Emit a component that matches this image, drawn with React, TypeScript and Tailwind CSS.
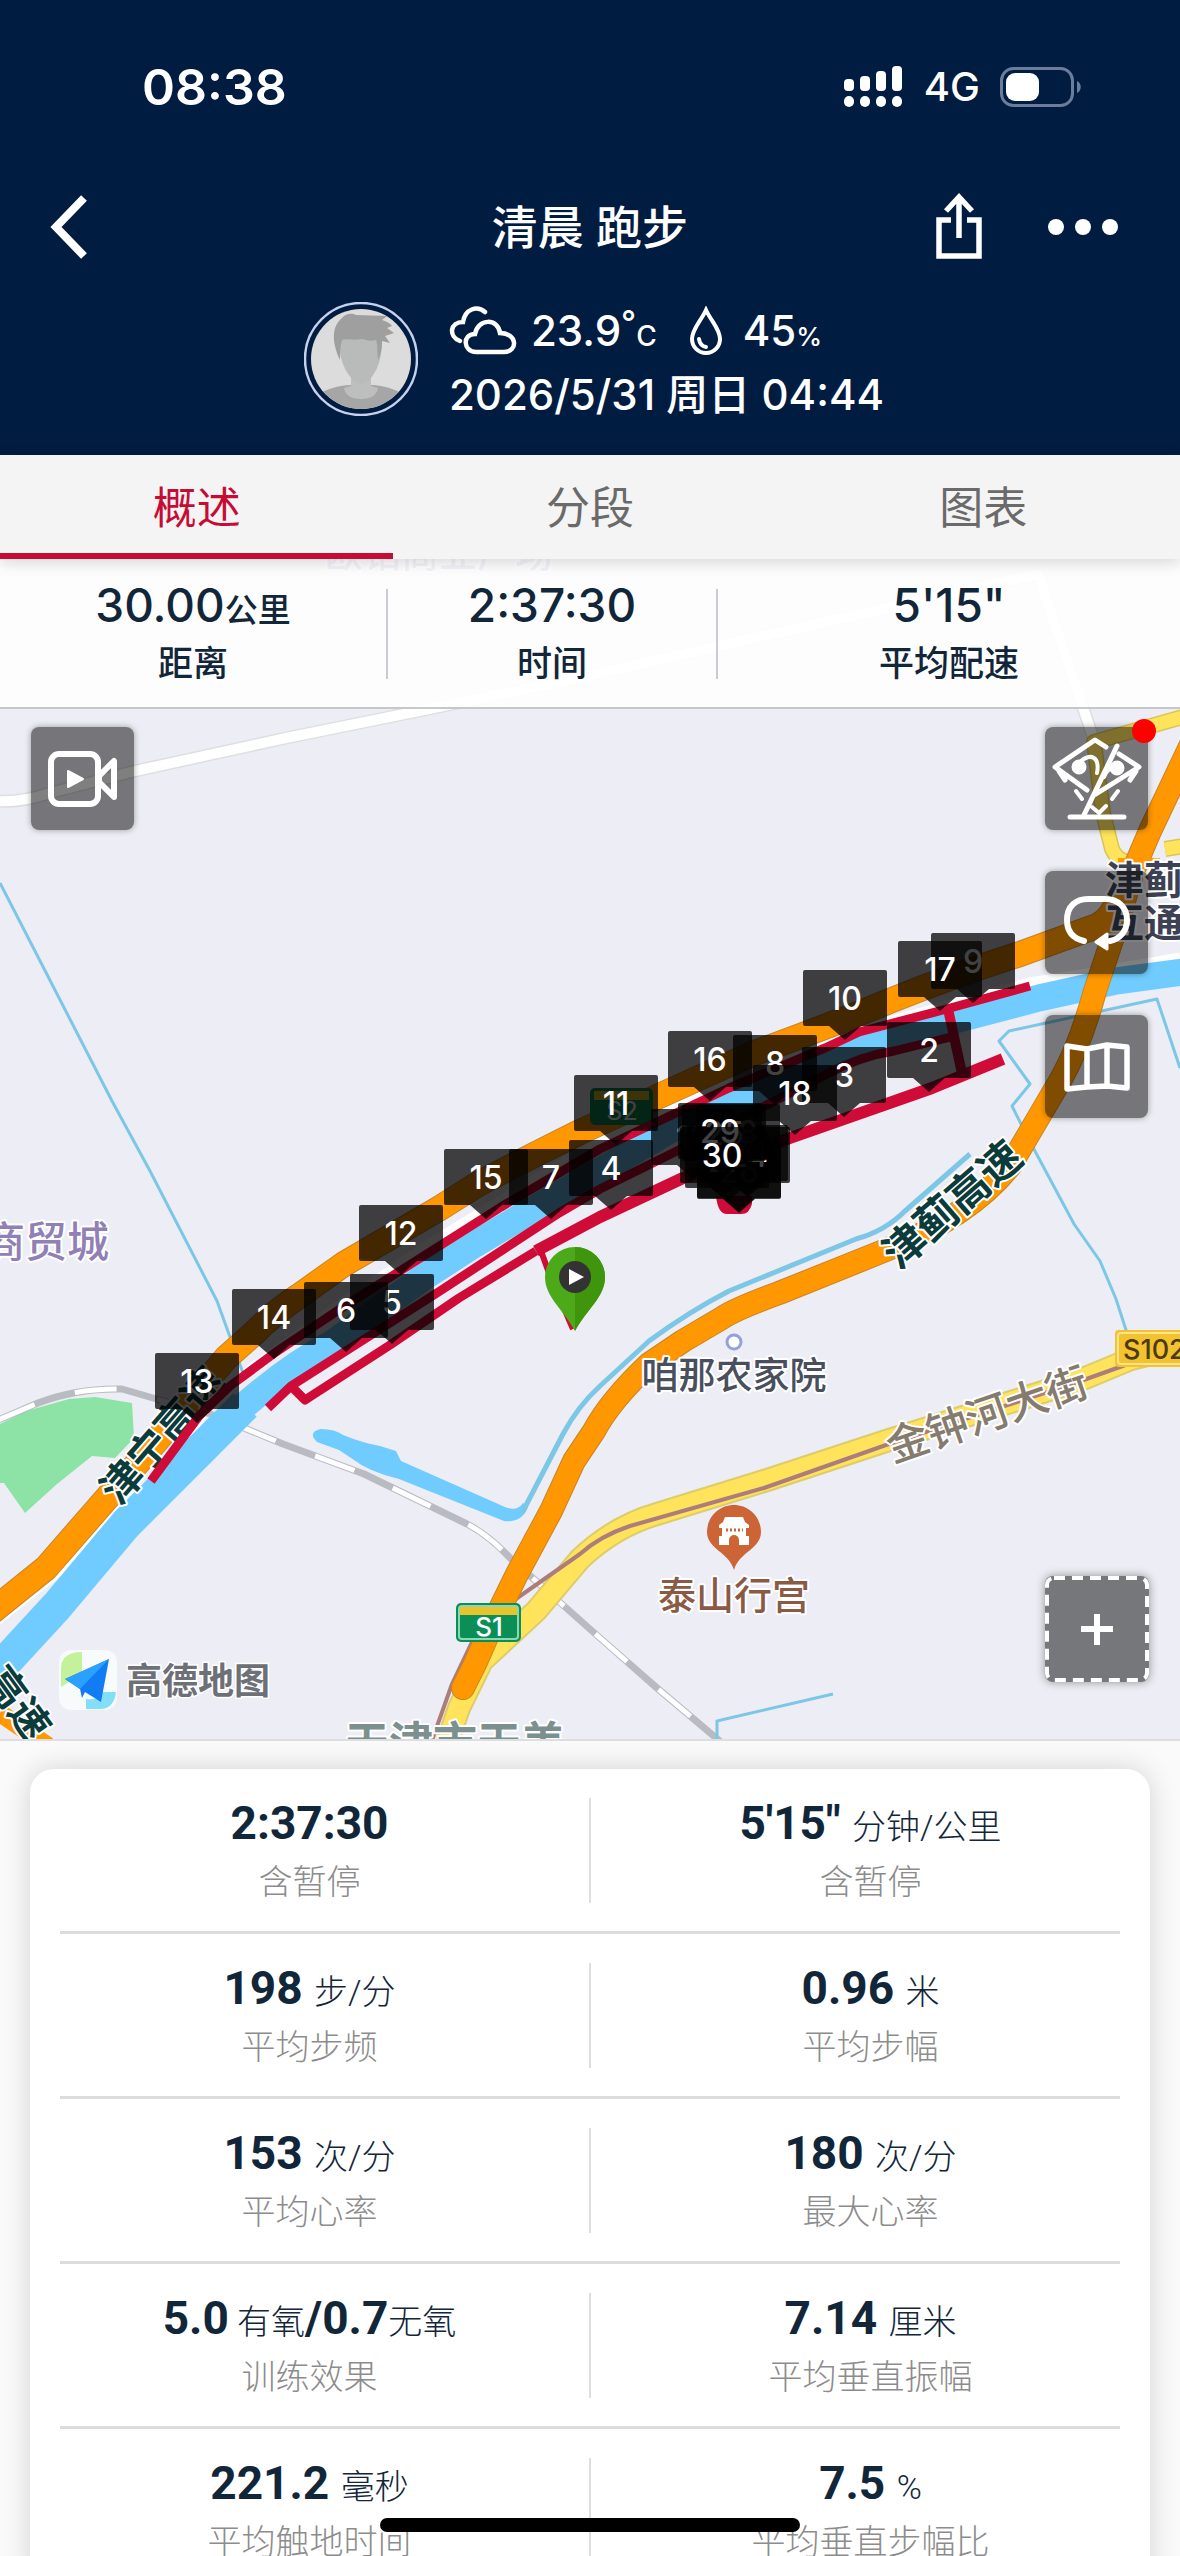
import React, { useState } from 'react';

type Marker = { n: string; x: number; y: number };

// x is the centre of the flag, y its top edge; later ones lie over earlier ones
const markers: Marker[] = [
  { n: '9', x: 973, y: 932 },
  { n: '2', x: 929, y: 1021 },
  { n: '3', x: 844, y: 1046 },
  { n: '4', x: 611, y: 1139 },
  { n: '5', x: 392, y: 1273 },
  { n: '6', x: 346, y: 1281 },
  { n: '7', x: 551, y: 1148 },
  { n: '8', x: 775, y: 1034 },
  { n: '10', x: 845, y: 969 },
  { n: '11', x: 616, y: 1074 },
  { n: '12', x: 401, y: 1204 },
  { n: '13', x: 197, y: 1352 },
  { n: '14', x: 274, y: 1288 },
  { n: '15', x: 486, y: 1148 },
  { n: '16', x: 710, y: 1030 },
  { n: '17', x: 940, y: 940 },
  { n: '18', x: 795, y: 1064 },
  { n: '19', x: 693, y: 1108 },
  { n: '21', x: 739, y: 1141 },
  { n: '22', x: 746, y: 1124 },
  { n: '26', x: 739, y: 1142 },
  { n: '27', x: 727, y: 1131 },
  { n: '24', x: 748, y: 1126 },
  { n: '28', x: 738, y: 1103 },
  { n: '25', x: 724, y: 1104 },
  { n: '29', x: 720, y: 1102 },
  { n: '30', x: 722, y: 1126 },
];

const summary = [
  { value: '30.00', unit: '公里', label: '距离' },
  { value: '2:37:30', unit: '', label: '时间' },
  { value: '5\'15"', unit: '', label: '平均配速' },
];

type Part = { text: string; unit?: boolean };
type Stat = { parts: Part[]; label: string };

const stat = (value: string, unit: string, label: string): Stat => ({
  parts: unit ? [{ text: value + ' ' }, { text: unit, unit: true }] : [{ text: value }],
  label,
});

const rows: Stat[][] = [
  [stat('2:37:30', '', '含暂停'), stat('5\'15"', '分钟/公里', '含暂停')],
  [stat('198', '步/分', '平均步频'), stat('0.96', '米', '平均步幅')],
  [stat('153', '次/分', '平均心率'), stat('180', '次/分', '最大心率')],
  [
    {
      parts: [
        { text: '5.0' },
        { text: ' 有氧', unit: true },
        { text: '/0.7' },
        { text: '无氧', unit: true },
      ],
      label: '训练效果',
    },
    stat('7.14', '厘米', '平均垂直振幅'),
  ],
  [stat('221.2', '毫秒', '平均触地时间'), stat('7.5', '%', '平均垂直步幅比')],
];

const StatusBar: React.FC = () => (
  <div className="flex h-[62px] items-center justify-between pl-[142px] pr-[98px]">
    <span className="text-[50px] leading-[62px] font-semibold">08:38</span>
    <div className="flex items-center gap-5">
      <svg width="60" height="42" viewBox="0 0 60 42" fill="#fff" aria-hidden="true">
        <rect x="0" y="13" width="10" height="12" rx="4" />
        <rect x="16" y="10" width="10" height="15" rx="4" />
        <rect x="32" y="5" width="10" height="20" rx="4" />
        <rect x="48" y="0" width="10" height="25" rx="4" />
        <rect x="0" y="30" width="10" height="11" rx="5" />
        <rect x="16" y="30" width="10" height="11" rx="5" />
        <rect x="32" y="30" width="10" height="11" rx="5" />
        <rect x="48" y="30" width="10" height="11" rx="5" />
      </svg>
      <span className="text-[40px] leading-[62px] font-medium">4G</span>
      <svg width="82" height="40" viewBox="0 0 82 40" aria-hidden="true">
        <rect x="1.5" y="1.5" width="71" height="37" rx="12" fill="none" stroke="#6b7c9c" strokeWidth="3" />
        <rect x="6" y="6" width="33" height="28" rx="9" fill="#fff" />
        <path d="M77 14c5 2 5 10 0 12z" fill="#6b7c9c" />
      </svg>
    </div>
  </div>
);

const Header: React.FC = () => (
  <header className="bg-[#001c40] pt-[56px] pb-[31px] text-white">
    <StatusBar />
    <div className="mt-[64px] grid h-[90px] grid-cols-[1fr_auto_1fr] items-center px-[46px]">
      <button aria-label="返回" className="justify-self-start">
        <svg width="44" height="66" viewBox="0 0 44 66" fill="none" stroke="#fff" strokeWidth="8">
          <path d="M38 4 10 33l28 29" />
        </svg>
      </button>
      <h1 className="text-[46px] leading-[60px] font-medium">清晨 跑步</h1>
      <div className="flex items-center justify-end gap-[62px] pr-[14px]">
        <button aria-label="分享">
          <svg width="50" height="70" viewBox="0 0 50 70" fill="none" stroke="#fff" strokeWidth="5.5">
            <path d="M17 28H5v36h40V28H33M25 46V7M12 19 25 5l13 14" />
          </svg>
        </button>
        <button aria-label="更多">
          <svg width="74" height="20" viewBox="0 0 74 20" fill="#fff">
            <circle cx="10" cy="10" r="8" />
            <circle cx="37" cy="10" r="8" />
            <circle cx="64" cy="10" r="8" />
          </svg>
        </button>
      </div>
    </div>
    <div className="mt-[30px] flex items-start justify-center gap-[31px] pl-2">
      <svg width="114" height="114" viewBox="0 0 114 114" role="img" aria-label="头像">
        <clipPath id="face">
          <circle cx="57" cy="57" r="50" />
        </clipPath>
        <circle cx="57" cy="57" r="56" fill="none" stroke="#c5d0ee" strokeWidth="2.5" />
        <g clipPath="url(#face)">
          <rect width="114" height="114" fill="#dcdcdc" />
          <path d="M18 90q16-7 28-7h24q14 1 30 9v22H18z" fill="#a6a6a6" />
          <path d="M47 76h20v8l7 2q-2 11-17 11T40 86l7-2z" fill="#bdbebe" />
          <path d="M35 34h43c1 24-6 36-12 43q-9 9-17 1C41 70 34 56 35 34z" fill="#b9bbbb" />
          <path d="M36 58c-8-17-9-33 2-42 4-5 10-5 14-3 12 0 22 1 31 1l-5 4c6 2 9 4 10 6l-5 2 7 5-9 3 5 7-8-2c0 7-1 13-4 19-1-8 0-14-2-20-8 2-12-1-15-1-8 2-14-1-19 1-2 7-2 13-2 20z" fill="#9f9f9f" />
        </g>
      </svg>
      <div className="flex flex-col gap-[6px] text-[42px] leading-[58px] font-medium">
        <div className="flex h-[58px] items-center">
          <svg width="70" height="50" viewBox="0 0 70 50" fill="none" stroke="#fff" strokeWidth="4.5" strokeLinecap="round" aria-hidden="true">
            <path d="M11 35C-1 30 1 16 14 16 16 3 28-1 36 6" />
            <path d="M27 46c-13 0-14-18-1-18C29 12 49 12 51 27c18 0 18 19 4 19z" />
          </svg>
          <p className="ml-3 h-[58px]">
            23.9
            <span className="text-[28px] leading-none">
              <span className="align-[12px] text-[33px] leading-none">°</span>C
            </span>
          </p>
          <svg className="ml-8 mr-5" width="34" height="50" viewBox="0 0 34 50" fill="none" stroke="#fff" strokeWidth="4" strokeLinecap="round" aria-hidden="true">
            <path d="M17 4C12 15 3 23 3 33a14 14 0 0 0 28 0C31 23 22 15 17 4z" />
            <path d="M10 33q1 7 7 8" />
          </svg>
          <p className="h-[58px]">
            45<span className="text-[26px] leading-none">%</span>
          </p>
        </div>
        <p className="h-[58px]">2026/5/31 周日 04:44</p>
      </div>
    </div>
  </header>
);

type LabelProps = { x: number; y: number; size: number; fill: string; rotate?: number; bold?: boolean; children: string };

const MapLabel: React.FC<LabelProps> = ({ x, y, size, fill, rotate = 0, bold, children }) => (
  <text
    transform={`translate(${x} ${y}) rotate(${rotate})`}
    textAnchor="middle"
    dominantBaseline="central"
    fontSize={size}
    fontWeight={bold ? 700 : 500}
    fill={fill}
    stroke="#fff"
    strokeWidth="4"
    strokeLinejoin="round"
    paintOrder="stroke"
  >
    {children}
  </text>
);

const orangeMain = 'M-10 1612 46 1567 107 1497 142 1457 226 1357 253 1333Q276 1310 299 1295L344 1263 440 1207 478 1183 536 1153 580 1131 668 1091 752 1053 798 1036 848 1017 892 999Q960 972 1020 953L1097 925Q1112 918 1118 898';
const orangeSide = 'M1195 735 1150 830 1133 870 1115 930 1095 990Q1080 1045 1060 1080L1010 1165Q970 1215 886 1249L779 1292Q735 1308 722 1317L683 1340 649 1363Q610 1400 594 1430L574 1460 551 1510 517 1573 494 1620 475 1663 463 1687';
const yellowRoad = 'M1180 1346 1131 1358 1078 1380 886 1440 764 1480 657 1513Q615 1525 580 1558L536 1610 482 1660 459 1707 446 1745';
const rail = 'M-4 1420 38 1402Q77 1387 122 1388L153 1397 210 1413 283 1443 364 1473 467 1523Q490 1535 513 1560L536 1580 555 1597 600 1637 657 1687 722 1742';
const river = 'M-14 1682 57 1605 126 1523 199 1450 245 1404Q290 1365 333 1342L421 1278 475 1243 536 1207 600 1170 668 1130 745 1095 886 1037 963 1017 1039 997 1116 980 1190 970';

const MapDrawing: React.FC = () => (
  <svg
    className="col-start-1 row-start-1 h-auto w-full bg-[#ededf5] font-['Inter','Noto_Sans_CJK_SC',sans-serif]"
    viewBox="0 558 1180 1180"
    role="img"
    aria-label="跑步路线地图"
  >
    <g fill="none" strokeLinejoin="round">
      <path d="M0 1423 23 1411 69 1398 95 1396 132 1402 134 1437 115 1457 92 1455 57 1483 25 1512 4 1482H0z" fill="#8ce3a5" />

      {/* small roads */}
      <path d="M-5 800Q20 802 50 792L135 770 286 737 429 708 564 680 1038 573 1095 742" stroke="#dcdfe0" strokeWidth="13" />
      <path d="M-5 800Q20 802 50 792L135 770 286 737 429 708 564 680 1038 573 1095 742" stroke="#fff" strokeWidth="10" />
      <path d="M-5 1622 60 1570 118 1500 160 1478 205 1410 250 1368 330 1310 430 1242 600 1138 760 1068 860 1028 1030 981 1100 970 1180 956" stroke="#fff" strokeWidth="9" />

      {/* railway */}
      <path d={rail} stroke="#b9bbc3" strokeWidth="7" />
      <path d={rail} stroke="#fff" strokeWidth="5" strokeDasharray="42 42" />

      {/* water */}
      <path d={river} stroke="#70ccff" strokeWidth="27" />
      <path d="M-14 1682 57 1605 126 1523 199 1450 245 1404" stroke="#70ccff" strokeWidth="33" />
      <path d="M321 1428q14 0 22 6 20 8 37 11l16 5 5 10 104 46q12 5 18-4l5 4q-6 16-24 14l-105-42q-30-7-48-21l-12-8-22-8q-10-10 4-13z" fill="#70ccff" />
      <g stroke="#7cc6e6" strokeWidth="3">
        <path d="M0 882 112 1100 150 1170 217 1300 243 1372" />
        <path d="M522 1512 563 1433Q578 1405 600 1385L649 1340Q690 1310 729 1290L856 1238Q885 1230 905 1210L970 1153" strokeWidth="5" />
        <path d="M1180 1067 1157 998 1009 1030 999 1040 1030 1083 1012 1105 1028 1137 1074 1223 1100 1260 1116 1298 1127 1332" />
        <path d="M717 1740V1720L833 1693" />
      </g>

      {/* main roads */}
      <path d="M1190 714 1094 741 1103 812 1112 848Q1120 866 1140 858M1165 848l25-4" stroke="#d9c553" strokeWidth="16" />
      <path d="M1190 714 1094 741 1103 812 1112 848Q1120 866 1140 858M1165 848l25-4" stroke="#ffe35a" strokeWidth="13" />
      <path d={yellowRoad} stroke="#dccd6a" strokeWidth="24" />
      <path d={yellowRoad} stroke="#ffe35a" strokeWidth="20" />
      <path d="M1131 1362 1078 1381 886 1444 764 1487 630 1525Q600 1535 580 1553L513 1600Q480 1630 471 1643L452 1683 430 1745" stroke="#ad7c7c" strokeWidth="4" />
      <path d={orangeMain} stroke="#c98324" strokeWidth="26" />
      <path d={orangeSide} stroke="#c98324" strokeWidth="24" strokeLinecap="round" />
      <path d={orangeMain} stroke="#ff9800" strokeWidth="24" />
      <path d={orangeSide} stroke="#ff9800" strokeWidth="22" strokeLinecap="round" />
      <path d="M0 1712 48 1745" stroke="#ff9800" strokeWidth="18" />
      <path d="M1118 862 1160 862" stroke="#ff9800" strokeWidth="10" />
    </g>

    {/* road shields */}
    <rect x="590" y="1087" width="63" height="37" rx="5" fill="#0a8f57" />
    <rect x="594" y="1090" width="55" height="9" fill="#e8c42c" />
    <text x="622" y="1119" textAnchor="middle" fontSize="25" fill="#fff">S2</text>
    <rect x="456" y="1602" width="65" height="39" rx="5" fill="#0a8f57" />
    <rect x="459" y="1605" width="59" height="33" rx="3" fill="none" stroke="#8fd6b4" strokeWidth="2" />
    <rect x="460" y="1606" width="57" height="8" fill="#e8c42c" />
    <text x="489" y="1635" textAnchor="middle" fontSize="26" fontWeight="500" fill="#fff">S1</text>
    <rect x="1115" y="1329" width="90" height="37" rx="4" fill="#f2c230" />
    <rect x="1118" y="1332" width="90" height="31" rx="3" fill="none" stroke="#ffe489" strokeWidth="2" />
    <text x="1123" y="1358" fontSize="27" fontWeight="500" fill="#4c3b12">S102</text>

    {/* place names */}
    <MapLabel x={439} y={552} size={38} fill="#8f86c4">欧铂商业广场</MapLabel>
    <MapLabel x={46} y={1240} size={42} fill="#9180b5">商贸城</MapLabel>
    <MapLabel x={1144} y={878} size={39} fill="#3c4154" bold>津蓟</MapLabel>
    <MapLabel x={1144} y={921} size={39} fill="#3c4154" bold>互通</MapLabel>
    <MapLabel x={952} y={1203} size={42} fill="#0b3b3b" rotate={-41} bold>津蓟高速</MapLabel>
    <MapLabel x={162} y={1434} size={41} fill="#0b3b3b" rotate={-49} bold>津宁高速</MapLabel>
    <MapLabel x={18} y={1702} size={40} fill="#0b3b3b" rotate={54} bold>高速</MapLabel>
    <MapLabel x={734} y={1374} size={37} fill="#4a4f5e">咱那农家院</MapLabel>
    <MapLabel x={987} y={1413} size={42} fill="#857b6f" rotate={-19}>金钟河大街</MapLabel>
    <MapLabel x={734} y={1594} size={38} fill="#8a5a45">泰山行宫</MapLabel>
    <MapLabel x={455} y={1742} size={44} fill="#7c9090" bold>天津市天美</MapLabel>
    <circle cx="734" cy="1341" r="7" fill="#fff" stroke="#93a0da" strokeWidth="3" />
    <path d="M734 1504c15 0 27 12 27 27 0 17-22 20-27 38-5-18-27-21-27-38 0-15 12-27 27-27z" fill="#cd6436" />
    <path d="M725 1516h18l2 5 4 3v3h-3v8h3v9h-10v-5a5 5 0 0 0-10 0v5h-10v-9h3v-8h-3v-3l4-3z" fill="#fff" />
    <path d="M726 1529h17" stroke="#cd6436" strokeWidth="3" strokeDasharray="2 2" />

    {/* recorded track */}
    <g fill="none" stroke="#cf0b37" strokeWidth="9" strokeLinejoin="round">
      <path d="M151 1480 199 1415 230 1385 276 1351 340 1308 411 1263 501 1206 600 1148 729 1087 825 1047 859 1031 943 1009 1030 985" />
      <path d="M268 1407 291 1385 360 1341 440 1290 559 1212 600 1188 683 1147 825 1074Q860 1055 894 1050L951 1036" />
      <path d="M291 1385 305 1399 390 1344 459 1297 536 1250" />
      <path d="M536 1250 600 1216 683 1177 790 1137 932 1087 1003 1058" strokeWidth="12" />
      <path d="M948 1008 963 1077" strokeWidth="10" />
      <path d="M541 1250 549 1272 573 1328" strokeWidth="6" />
    </g>
    <path d="M716 1195h36v8q-3 11-12 10h-12q-10 1-12-18z" fill="#cf0b37" />

    {markers.map(({ n, x, y }) => (
      <g key={n} transform={`translate(${x} ${y})`}>
        <path d="M-40 0h80q2 0 2 2v52q0 2-2 2H16L0 70-16 56h-24q-2 0-2-2V2q0-2 2-2z" fill="#000" fillOpacity="0.74" />
        <text y="40" textAnchor="middle" fontSize="32" fontWeight="500" fill="#fff">
          {n}
        </text>
      </g>
    ))}

    {/* start pin */}
    <path d="M575 1246a30 30 0 0 1 30 30c0 20-18 32-30 54-12-22-30-34-30-54a30 30 0 0 1 30-30z" fill="#4caa18" />
    <path d="M575 1246a30 30 0 0 1 30 30c0 20-18 32-30 54z" fill="#3f950c" />
    <circle cx="575" cy="1276" r="16" fill="#333" />
    <path d="M569 1268v16l15-8z" fill="#fff" />

    {/* map vendor mark */}
    <rect x="59" y="1649" width="58" height="60" rx="12" fill="#f8fbfc" />
    <path d="M61 1670q-1-19 21-19v22l-21 13z" fill="#c3f29b" />
    <path d="M86 1698q12 2 15-7h15q-2 17-16 17H86z" fill="#83def8" />
    <path d="M65 1678 109 1658 101 1701 85 1691 82 1697 80 1688z" fill="#117cf4" />
    <path d="M109 1658 80 1688 65 1678z" fill="#2aa0ff" />
    <text x="198" y="1693" textAnchor="middle" fontSize="36" fontWeight="700" fill="#6d7076" stroke="#fff" strokeWidth="3" paintOrder="stroke">
      高德地图
    </text>
  </svg>
);

const MapButton: React.FC<{ label: string; dot?: boolean; children: React.ReactNode }> = ({ label, dot, children }) => (
  <button
    aria-label={label}
    className="relative flex h-[103px] w-[103px] items-center justify-center rounded-lg bg-black/50 shadow-[0_0_6px_rgba(0,0,0,0.35)]"
  >
    {children}
    {dot && <span className="absolute -top-2 -right-2 h-6 w-6 rounded-full bg-[#ff0000]" />}
  </button>
);

const MapSection: React.FC = () => (
  <section className="grid border-b-2 border-[#dddde2]">
    <MapDrawing />
    <div className="z-10 col-start-1 row-start-1 flex flex-col">
      <div className="grid h-[150px] grid-cols-[388fr_330fr_462fr] border-b-2 border-[#c6c7c9] bg-white/90 pt-[2px] text-[#12263a]">
        {summary.map((s, i) => (
          <div key={s.label} className="flex items-center">
            <div className="flex-1 text-center font-medium">
              <p className="h-[58px] text-[46px] leading-[58px]">
                {s.value}
                {s.unit && <span className="text-[33px] leading-none">{s.unit}</span>}
              </p>
              <p className="h-[58px] text-[35px] leading-[58px]">{s.label}</p>
            </div>
            {i < summary.length - 1 && <div className="h-[90px] w-[2px] bg-[#c9ccd1]" />}
          </div>
        ))}
      </div>
      <div className="flex flex-1 justify-between px-[31px] pt-[18px] pb-[57px]">
        <MapButton label="视频">
          <svg width="70" height="56" viewBox="0 0 70 56" fill="none" stroke="#fff" strokeWidth="6" strokeLinejoin="round">
            <rect x="3" y="3" width="47" height="50" rx="8" />
            <path d="M51 25 66 10v36L51 31z" />
            <path d="M20 20v16l15-8z" fill="#fff" strokeWidth="2" />
          </svg>
        </MapButton>
        <div className="flex flex-col">
          <div className="flex flex-col gap-[41px]">
            <MapButton label="街景" dot>
              <svg width="90" height="84" viewBox="0 0 90 84" fill="none" stroke="#fff" strokeWidth="5" strokeLinecap="round" strokeLinejoin="round">
                <path d="M54 10 43 3 3 30l32 23M7 34l6 9M67 17l20 13-43 27M84 34l-6 9M65 9 32 78M18 80h54" />
                <path d="M24 54l6 8M66 54l-6 8M40 70l7 6 7-7M29 24c10-8 19-4 16 12M52 40q3-9 12-10" strokeWidth="4" />
                <circle cx="27" cy="30" r="5" fill="#fff" />
                <circle cx="65" cy="31" r="5" fill="#fff" />
              </svg>
            </MapButton>
            <MapButton label="回放">
              <svg width="68" height="60" viewBox="0 0 68 60" fill="none" stroke="#fff" strokeWidth="6" strokeLinecap="round">
                <path d="M21 48C8 45 4 36 4 27 4 13 13 6 25 6h17c13 0 22 8 22 21 0 11-7 19-17 21" />
                <path d="M33 49 44 41v15z" fill="#fff" strokeWidth="3" strokeLinejoin="round" />
              </svg>
            </MapButton>
            <MapButton label="地图类型">
              <svg width="66" height="50" viewBox="0 0 66 50" fill="none" stroke="#fff" strokeWidth="5.5" strokeLinejoin="round">
                <path d="M3 4 23 7 43 3l20 2v41l-20-2-20 1L3 47zM23 7v38M43 3v41" />
              </svg>
            </MapButton>
          </div>
          <button
            aria-label="添加"
            className="mt-auto flex h-[106px] w-[104px] items-center justify-center rounded-lg bg-[#76777b] shadow-[0_0_10px_rgba(0,0,0,0.4)]"
          >
            <svg width="104" height="106" viewBox="0 0 104 106" fill="none" stroke="#fff">
              <rect x="2" y="2" width="100" height="102" rx="7" strokeWidth="4" strokeDasharray="11 7" />
              <path d="M52 38v31M36 53h32" strokeWidth="6" />
            </svg>
          </button>
        </div>
      </div>
    </div>
  </section>
);

const StatCell: React.FC<{ item: Stat }> = ({ item }) => (
  <div className="flex-1 pt-1 text-center">
    <p className="h-[60px] text-[46px] leading-[60px] font-bold text-[#12263a]">
      {item.parts.map((p, i) => (
        <span key={i} className={p.unit ? 'text-[34px] leading-none font-light' : ''}>
          {p.text}
        </span>
      ))}
    </p>
    <p className="h-[58px] text-[34px] leading-[58px] font-light text-[#8c8c8c]">{item.label}</p>
  </div>
);

const App: React.FC = () => {
  const [tab, setTab] = useState('概述');

  return (
    <div className="relative flex h-screen flex-col overflow-hidden bg-[#fafafa] font-['Inter','Noto_Sans_CJK_SC',sans-serif]">
      <Header />
      <nav className="z-20 grid grid-cols-3 bg-[#f4f4f4] shadow-[0_4px_14px_rgba(0,0,0,0.15)]">
        {['概述', '分段', '图表'].map((t) => (
          <button
            key={t}
            onClick={() => setTab(t)}
            className={`h-[104px] border-b-[6px] pt-2 text-[44px] leading-[60px] ${
              t === tab ? 'border-[#c60c35] text-[#c60c35]' : 'border-transparent text-[#6a6a6a]'
            }`}
          >
            {t}
          </button>
        ))}
      </nav>
      <main className="min-h-0 flex-1 overflow-y-auto [scrollbar-width:none]">
        <MapSection />
        <section className="mx-[30px] mt-[28px] rounded-3xl bg-white font-['Roboto','Noto_Sans_CJK_SC',sans-serif] shadow-[0_0_28px_rgba(0,0,0,0.16)]">
          {rows.map((row, i) => (
            <div key={i}>
              {i > 0 && <div className="mx-[30px] h-[3px] bg-[#dcdcdc]" />}
              <div className="flex h-[162px] items-center">
                <StatCell item={row[0]} />
                <div className="h-[105px] w-[2px] bg-[#dedede]" />
                <StatCell item={row[1]} />
              </div>
            </div>
          ))}
        </section>
      </main>
      {/* home indicator */}
      <div className="absolute bottom-6 left-1/2 z-30 h-[14px] w-[420px] -translate-x-1/2 rounded-full bg-black" />
    </div>
  );
};

export default App;
